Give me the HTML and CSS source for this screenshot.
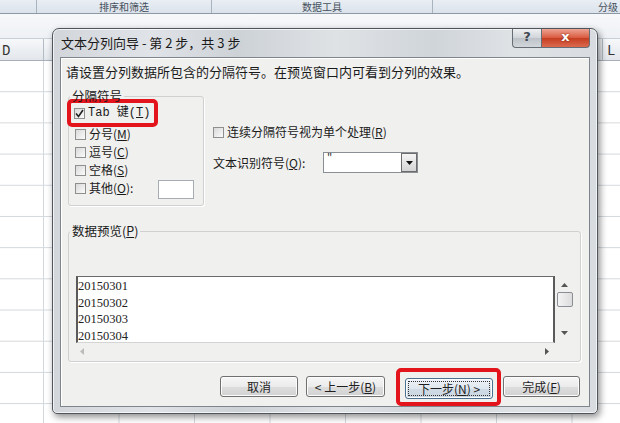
FILE: index.html
```html
<!DOCTYPE html>
<html lang="zh-CN">
<head>
    <meta charset="UTF-8">
    <meta name="viewport" content="width=device-width, initial-scale=1.0">
    <title>文本分列向导</title>
    <link rel="stylesheet" href="styles.css">
</head>
<body>
    <div class="ribbon">
        <div class="grp grp-a"></div>
        <div class="grp grp-b">排序和筛选</div>
        <div class="grp grp-c">数据工具</div>
        <div class="grp grp-d">分级</div>
    </div>
    <div class="bar"></div>
    <div class="col-head">
        <span class="col col-d">D</span>
        <span class="col col-mid"></span>
        <span class="col col-l">L</span>
    </div>
    <div class="sheet"></div>

    <div class="dialog">
        <div class="titlebar">
            <span class="title">文本分列向导 - 第 2 步，共 3 步</span>
            <span class="tb-btn help">?</span>
            <span class="tb-btn close">x</span>
        </div>
        <div class="client">
            <p class="intro">请设置分列数据所包含的分隔符号。在预览窗口内可看到分列的效果。</p>
            <div class="upper">
                <fieldset class="delims">
                    <legend>分隔符号</legend>
                    <div class="mark mark-tab">
                        <label class="opt">
                            <span class="cb"><svg width="9" height="9" viewBox="0 0 9 9"><polyline points="1,4.5 3.5,7.5 8,1" fill="none" stroke="#222" stroke-width="1.6"/></svg></span>
                            <span class="tab-text">Tab 键(<u>T</u>)</span>
                        </label>
                    </div>
                    <label class="opt"><span class="cb"></span>分号(<u>M</u>)</label>
                    <label class="opt"><span class="cb"></span>逗号(<u>C</u>)</label>
                    <label class="opt"><span class="cb"></span>空格(<u>S</u>)</label>
                    <label class="opt"><span class="cb"></span>其他(<u>O</u>):<span class="other-box"></span></label>
                </fieldset>
                <div class="side">
                    <label class="opt"><span class="cb"></span>连续分隔符号视为单个处理(<u>R</u>)</label>
                    <div class="qual">
                        <span class="qual-label">文本识别符号(<u>Q</u>):</span>
                        <span class="combo">
                            <span class="combo-val">"</span>
                            <span class="combo-btn"><svg width="7" height="4" viewBox="0 0 7 4"><polygon points="0,0 7,0 3.5,4" fill="#111"/></svg></span>
                        </span>
                    </div>
                </div>
            </div>
            <fieldset class="preview">
                <legend>数据预览(<u>P</u>)</legend>
                <div class="list">
                    <div class="list-body">
                        <div>20150301</div>
                        <div>20150302</div>
                        <div>20150303</div>
                        <div>20150304</div>
                    </div>
                    <div class="vscroll">
                        <svg width="7" height="4" viewBox="0 0 7 4"><polygon points="0,4 7,4 3.5,0" fill="#555"/></svg>
                        <span class="thumb"></span>
                        <svg class="down" width="7" height="4" viewBox="0 0 7 4"><polygon points="0,0 7,0 3.5,4" fill="#555"/></svg>
                    </div>
                    <div class="hscroll">
                        <svg width="4" height="7" viewBox="0 0 4 7"><polygon points="4,0 4,7 0,3.5" fill="#bbb"/></svg>
                        <svg width="4" height="7" viewBox="0 0 4 7"><polygon points="0,0 0,7 4,3.5" fill="#555"/></svg>
                    </div>
                </div>
            </fieldset>
            <div class="buttons">
                <button class="btn btn-cancel">取消</button>
                <button class="btn btn-back">&lt; 上一步(<u>B</u>)</button>
                <span class="mark mark-next">
                    <button class="btn btn-default"><span class="focus">下一步(<u>N</u>) &gt;</span></button>
                </span>
                <button class="btn btn-finish">完成(<u>F</u>)</button>
            </div>
        </div>
    </div>
</body>
</html>
```

FILE: styles.css
```css
* { box-sizing: border-box; }
body { margin: 0; width: 620px; height: 423px; overflow: hidden; position: relative; background: #fff; font-family: "Noto Sans CJK SC", "DejaVu Sans", sans-serif; font-size: 12px; color: #1a1a1a; }
u { text-decoration: underline; text-underline-offset: 1px; }

/* spreadsheet behind the dialog */
.ribbon { display: flex; height: 14px; background: linear-gradient(#e9eef4, #dbe2ea); border-bottom: 1px solid #8d98a5; }
.grp { font-size: 10px; line-height: 13px; color: #46505c; text-align: center; border-right: 1px solid #a9b3be; white-space: nowrap; }
.grp-a { width: 37px; }
.grp-b { width: 175px; }
.grp-c { width: 221px; }
.grp-d { flex: 1; border-right: 0; text-align: left; padding-left: 165px; }
.bar { height: 25px; background: linear-gradient(#f7f8fa, #eef1f5); border-bottom: 1px solid #c9d0d8; }
.col-head { display: flex; height: 22px; background: linear-gradient(#f7f8fa, #e2e6eb); border-bottom: 1px solid #a7b0ba; font-family: "Liberation Mono", monospace; font-size: 14px; line-height: 24px; color: #333; }
.col-d { width: 44px; padding-left: 2px; border-right: 1px solid #b3bcc6; }
.col-mid { width: 559px; border-right: 1px solid #b3bcc6; }
.col-l { padding-left: 4px; }
.sheet {
    height: 362px;
    background-image: linear-gradient(to right, #d3d8dd 1px, transparent 1px), linear-gradient(to bottom, transparent 30.2px, #d3d8dd 30.2px);
    background-size: 75.5px 100%, 100% 31.2px;
    background-position: 43px 0, 0 0;
}

/* dialog window */
.dialog {
    position: absolute; left: 52px; top: 28px; width: 546px; height: 386px;
    border: 1px solid #4f555c; border-radius: 7px 7px 5px 5px;
    padding: 0 7px 6px;
    background: linear-gradient(to right, #d2d6db, #e0e3e7 18%, #cdd2d7 34%, #dfe2e5 52%, #d0d5da 70%, #e0e3e6 86%, #d8dbdf);
    box-shadow: 2px 3px 7px rgba(0,0,0,.45), inset 0 0 0 1px rgba(255,255,255,.7);
}
.titlebar { display: flex; align-items: flex-start; height: 28px; }
.title { flex: 1; margin: 6px 0 0 1px; font-size: 13px; line-height: 16px; color: #1a1a1a; white-space: nowrap; }
.tb-btn { height: 19px; border: 1px solid #676d74; border-top: 0; text-align: center; font-family: "DejaVu Sans", sans-serif; font-weight: bold; font-size: 13px; line-height: 16px; }
.help { width: 30px; border-radius: 0 0 0 4px; color: #424851; background: linear-gradient(#eef0f2, #d0d4d8 50%, #bcc2c8 51%, #d3d7db); }
.close { width: 48px; border-left: 0; border-radius: 0 0 4px 0; color: #fff; background: linear-gradient(#eda493, #d9593d 50%, #c43d20 51%, #dc6a4f); text-shadow: 0 0 2px #7a1a08; }

.client { display: flex; flex-direction: column; height: 350px; border: 1px solid #7e858c; background: #f0f0ef; box-shadow: inset 1px 1px 0 #fff; }
.intro { margin: 6px 0 0 5px; font-size: 13px; line-height: 16px; white-space: nowrap; }

.upper { display: flex; height: 118px; margin-top: 8px; padding-left: 7px; }
fieldset { margin: 0; padding: 0; border: 1px solid #d0d0d0; border-radius: 3px; box-shadow: 1px 1px 0 #fff; }
legend { margin-left: 1px; padding: 0 2px; font-size: 12.5px; line-height: 16px; }
.delims { width: 136px; height: 118px; }

.mark { border: 4px solid #e3141b; border-radius: 5px; }
.mark-tab { width: 91px; height: 28px; margin: -5px 0 0 -2px; padding: 2px 0 0 3px; }
.mark-tab .opt { height: 16px; }
.tab-text { font-family: "Liberation Mono", "Noto Sans CJK SC", monospace; font-size: 12px; }

.opt { display: flex; align-items: center; height: 18px; line-height: 16px; white-space: nowrap; }
.delims > .opt { padding-left: 6px; }
.delims > .mark + .opt { margin-top: -2px; }
.cb { display: flex; align-items: center; justify-content: center; flex: none; width: 11px; height: 11px; margin-right: 3px; border: 1px solid #8e8f8f; background: linear-gradient(135deg, #d9d9d9, #fbfbfb); }
.other-box { width: 36px; height: 19px; margin: 3px 9px 0 auto; border: 1px solid #a5acb5; background: #fff; }

.side { margin-left: 9px; padding-top: 36px; }
.side > .opt { height: 16px; }
.qual { display: flex; align-items: center; height: 21px; margin-top: 12px; }
.qual-label { width: 110px; white-space: nowrap; }
.combo { display: flex; width: 95px; height: 21px; border: 1px solid #8a8f95; background: #fff; }
.combo-val { flex: 1; padding-left: 3px; font-size: 11px; line-height: 11px; color: #333; }
.combo-btn { display: flex; align-items: center; justify-content: center; width: 16px; border: 1px solid #6c6c6c; background: linear-gradient(#f5f5f5, #d4d4d4); }

.preview { height: 139px; margin: 17px 8px 0 7px; }
.list { display: grid; grid-template-columns: 1fr 19px; grid-template-rows: 67px 17px; width: 498px; margin: 37px 0 0 7px; }
.list-body { padding-top: 1px; background: #fff; border-top: 1px solid #6a6a6a; border-left: 2px solid #5a5a5a; border-right: 2px solid #5a5a5a; border-bottom: 1px solid #d4d4d4; font-family: "Liberation Serif", serif; font-size: 12.5px; line-height: 16.5px; color: #222; overflow: hidden; }
.vscroll { display: flex; flex-direction: column; align-items: center; padding: 7px 0 8px; }
.thumb { width: 16px; height: 15px; margin-top: 5px; border: 1px solid #8a8f95; border-radius: 2px; background: linear-gradient(to right, #f4f4f4, #dcdcdc); }
.vscroll .down { margin-top: auto; }
.hscroll { display: flex; align-items: center; justify-content: space-between; padding: 0 6px 0 4px; }

.buttons { display: flex; align-items: center; justify-content: flex-end; height: 39px; margin-top: 5px; padding-right: 9px; }
.btn { width: 78px; height: 21px; padding: 0; border: 1px solid #707070; border-radius: 3px; background: linear-gradient(#f6f6f6, #ebebeb 50%, #dddddd 51%, #d2d2d2); box-shadow: inset 0 0 0 1px #fcfcfc; font-family: "Noto Sans CJK SC", sans-serif; font-size: 12px; line-height: 17px; color: #1f1f1f; }
.btn-cancel { margin-right: 8px; }
.btn-back { width: 79px; margin-right: 11px; }
.mark-next { display: block; width: 105px; height: 38px; margin-right: 2px; padding: 6px 4px 0 5px; }
.btn-default { width: 88px; border-color: #4b6f8f; background: linear-gradient(#eef3f7, #dfe7ee 50%, #d0dbe5 51%, #cad6e1); }
.focus { display: block; height: 15px; margin: 0 2px; border: 1px dotted #333; line-height: 13px; }
.btn-finish { width: 77px; }
```
